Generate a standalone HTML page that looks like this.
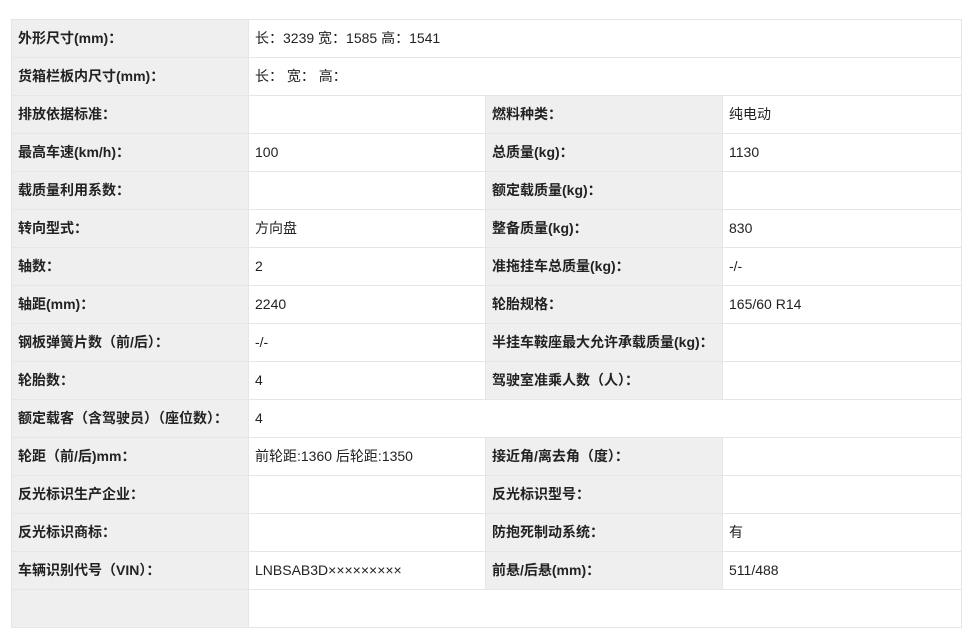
<!DOCTYPE html>
<html><head><meta charset="utf-8"><style>
body{margin:0;background:#fff;width:973px;height:596px;overflow:hidden;font-family:"Liberation Sans","Noto Sans CJK SC",sans-serif;font-size:14px;color:#222}
table{position:absolute;left:11px;top:19px;border-collapse:collapse;table-layout:fixed;width:950px}
td{height:37px;border:1px solid #e6e6e6;padding:0 0 0 6px;white-space:nowrap;overflow:hidden;line-height:37px;vertical-align:middle}
td span{display:inline-block;vertical-align:middle;line-height:20px}
td.l{background:#efefef;font-weight:bold}
</style></head><body>
<table>
<colgroup><col style="width:237px"><col style="width:237px"><col style="width:237px"><col style="width:239px"></colgroup>
<tr><td class="l">外形尺寸(mm)：</td><td colspan="3">长：3239 宽：1585 高：1541</td></tr>
<tr><td class="l">货箱栏板内尺寸(mm)：</td><td colspan="3">长：&nbsp;宽：&nbsp;高：</td></tr>
<tr><td class="l">排放依据标准：</td><td></td><td class="l">燃料种类：</td><td>纯电动</td></tr>
<tr><td class="l">最高车速(km/h)：</td><td>100</td><td class="l">总质量(kg)：</td><td>1130</td></tr>
<tr><td class="l">载质量利用系数：</td><td></td><td class="l">额定载质量(kg)：</td><td></td></tr>
<tr><td class="l">转向型式：</td><td>方向盘</td><td class="l">整备质量(kg)：</td><td>830</td></tr>
<tr><td class="l">轴数：</td><td>2</td><td class="l">准拖挂车总质量(kg)：</td><td>-/-</td></tr>
<tr><td class="l">轴距(mm)：</td><td>2240</td><td class="l">轮胎规格：</td><td>165/60 R14</td></tr>
<tr><td class="l">钢板弹簧片数（前/后）：</td><td>-/-</td><td class="l">半挂车鞍座最大允许承载质量(kg)：</td><td></td></tr>
<tr><td class="l">轮胎数：</td><td>4</td><td class="l">驾驶室准乘人数（人）：</td><td></td></tr>
<tr><td class="l">额定载客（含驾驶员）（座位数）：</td><td colspan="3">4</td></tr>
<tr><td class="l">轮距（前/后)mm：</td><td>前轮距:1360 后轮距:1350</td><td class="l">接近角/离去角（度）：</td><td></td></tr>
<tr><td class="l">反光标识生产企业：</td><td></td><td class="l">反光标识型号：</td><td></td></tr>
<tr><td class="l">反光标识商标：</td><td></td><td class="l">防抱死制动系统：</td><td>有</td></tr>
<tr><td class="l">车辆识别代号（VIN）：</td><td>LNBSAB3D×××××××××</td><td class="l">前悬/后悬(mm)：</td><td>511/488</td></tr>
<tr><td class="l"></td><td colspan="3"></td></tr>
</table>
</body></html>
